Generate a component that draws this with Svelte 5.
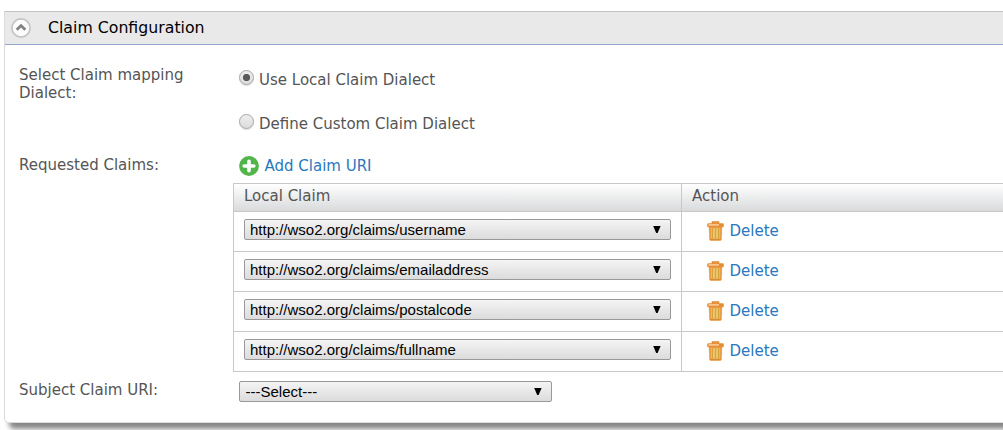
<script>
  const claims = ['username', 'emailaddress', 'postalcode', 'fullname'];
</script>

{#snippet selectBox(text, narrow)}
  <button class="select" class:narrow type="button">
    <span>{text}</span>
    <svg width="8" height="7" viewBox="0 0 8 7"><path d="M.2 0h7.4L4.6 7H3.2z" fill="#000" /></svg>
  </button>
{/snippet}

<section class="panel">
  <header>
    <svg width="20" height="20" viewBox="0 0 20 20">
      <circle cx="10" cy="10" r="9.1" fill="#fcfcfc" stroke="#c4c4c4" stroke-width="1.7" />
      <path d="M5.7 11.8 10 7.6l4.3 4.2" fill="none" stroke="#808080" stroke-width="2.8" />
    </svg>
    <h1>Claim Configuration</h1>
  </header>

  <div class="row mapping">
    <div class="label">Select Claim mapping Dialect:</div>
    <div class="options">
      <label><span class="radio checked"></span>Use Local Claim Dialect</label>
      <label><span class="radio"></span>Define Custom Claim Dialect</label>
    </div>
  </div>

  <div class="row requested">
    <div class="label">Requested Claims:</div>
    <div class="claims">
      <a class="add" href="#add">
        <svg width="20" height="20" viewBox="0 0 20 20">
          <circle cx="10" cy="10" r="9.9" fill="#52b54a" />
          <path d="M10 5.2v9.6M5.2 10h9.6" stroke="#fff" stroke-width="3.6" stroke-linecap="round" />
        </svg>
        Add Claim URI
      </a>
      <div class="table">
        <div class="tr head"><div class="td">Local Claim</div><div class="td">Action</div></div>
        {#each claims as claim}
          <div class="tr">
            <div class="td">{@render selectBox('http://wso2.org/claims/' + claim, false)}</div>
            <div class="td action">
              <a href="#delete">
                <svg width="17" height="20" viewBox="0 0 17 20">
                  <path d="M5.4 3V.9h6.2V3" fill="#efa653" stroke="#e08a35" stroke-width="1.4" />
                  <path d="M1.8 6h13.4l-.5 12.2q-.2 1.6-1.8 1.6H4.1q-1.6 0-1.8-1.6z" fill="#e9a044" />
                  <path d="M4 7h9v10.5H4z" fill="#e7bb58" />
                  <path d="M5.5 7v10.5M8.5 7v10.5M11.5 7v10.5" stroke="#d9a03f" stroke-width="1" />
                  <path d="M7 7v10.5M10 7v10.5" stroke="#efcf7b" stroke-width="1" />
                  <path d="M3 18.6h11" stroke="#d98b3c" stroke-width="1.2" />
                  <rect x=".2" y="2.3" width="16.6" height="4" rx="1.3" fill="#e78b35" />
                  <path d="M1.5 3.9h10.5" stroke="#f8c893" stroke-width="1.7" />
                </svg>
                Delete
              </a>
            </div>
          </div>
        {/each}
      </div>
    </div>
  </div>

  <div class="row">
    <div class="label subject">Subject Claim URI:</div>
    <div class="subject-field">{@render selectBox('---Select---', true)}</div>
  </div>
</section>

<style>
  :global(body) {
    background: #fff;
    overflow: hidden;
  }
  :global(#app) {
    box-sizing: border-box;
    height: 430px;
    padding: 11px 0 0 4px;
  }
  .panel {
    box-sizing: border-box;
    width: 1020px;
    height: 412px;
    border: 1px solid #dcdcdc;
    border-top-color: #c3c3c3;
    border-radius: 0 0 5px 5px;
    background: #fff;
    box-shadow: 5px 6px 5px #888;
    font: 15px/18px 'DejaVu Sans', sans-serif;
    color: #555;
  }
  header {
    box-sizing: border-box;
    height: 33px;
    display: flex;
    align-items: center;
    padding-left: 6px;
    gap: 17px;
    background: #e9e9e9;
    border-bottom: 1px solid #94a6cc;
  }
  h1 {
    margin: 0;
    font: inherit;
    font-size: 15.75px;
    color: #000;
  }
  svg {
    display: block;
    flex: none;
  }
  .row {
    display: flex;
    padding-left: 14px;
  }
  .label {
    flex: none;
    width: 175px;
    margin-right: 39px;
  }
  .mapping {
    height: 111px;
    box-sizing: border-box;
    padding-top: 21px;
  }
  .options {
    display: flex;
    flex-direction: column;
    gap: 26px;
    padding: 5px 0 0 6px;
  }
  .options label {
    display: flex;
    gap: 5px;
    white-space: nowrap;
  }
  .radio {
    box-sizing: border-box;
    width: 15px;
    height: 15px;
    margin-top: -1px;
    border: 1px solid #a5a5a5;
    border-radius: 50%;
    background: linear-gradient(#eee, #dcdcdc);
    box-shadow: 0 1px 1px #ddd;
  }
  .radio.checked {
    background: radial-gradient(circle, #5a5a5a 3.3px, transparent 4px), linear-gradient(#eee, #dcdcdc);
  }
  a {
    display: flex;
    align-items: center;
    gap: 5.5px;
    color: #2a78bd;
    text-decoration: none;
  }
  .add {
    height: 20px;
    padding: 0 0 7px 6px;
  }
  .table {
    width: 780px;
    border: 1px solid #c8c8c8;
    border-bottom: 0;
  }
  .tr {
    display: flex;
    box-sizing: border-box;
    height: 40px;
    border-bottom: 1px solid #c8c8c8;
  }
  .tr.head {
    height: 28px;
    background: linear-gradient(#fff, #d8dadb);
  }
  .td {
    box-sizing: border-box;
    padding: 7px 10px 0;
  }
  .head .td {
    padding-top: 3px;
  }
  .td:first-child {
    width: 448px;
    border-right: 1px solid #c8c8c8;
  }
  .action {
    padding: 9px 0 0 25px;
  }
  .select {
    display: flex;
    box-sizing: border-box;
    width: 427px;
    height: 21px;
    padding: 0 9px 0 5px;
    justify-content: space-between;
    align-items: center;
    border: 1px solid #999;
    border-radius: 2px;
    background: linear-gradient(#f4f4f4, #dcdcdc);
    color: #000;
    font: 15px/19px 'Liberation Sans', sans-serif;
  }
  .select.narrow {
    width: 313px;
    padding-left: 5.5px;
  }
  .subject {
    padding-top: 9px;
  }
  .subject-field {
    padding: 9px 0 0 6px;
  }
</style>
